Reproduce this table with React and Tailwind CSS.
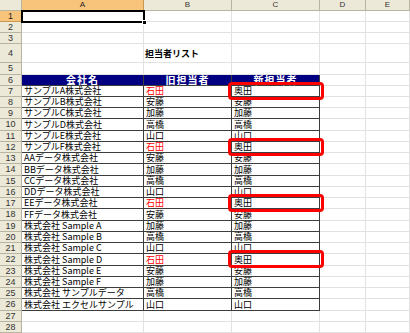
import React from "react";

const COLS = [122, 88, 88, 46];
const A = [
  "サンプルA株式会社","サンプルB株式会社","サンプルC株式会社","サンプルD株式会社","サンプルE株式会社","サンプルF株式会社",
  "AAデータ株式会社","BBデータ株式会社","CCデータ株式会社","DDデータ株式会社","EEデータ株式会社","FFデータ株式会社",
  "株式会社 Sample A","株式会社 Sample B","株式会社 Sample C","株式会社 Sample D","株式会社 Sample E","株式会社 Sample F",
  "株式会社 サンプルデータ","株式会社 エクセルサンプル",
];
const cycle = ["石田","安藤","加藤","高橋","山口"];
const B = A.map((_, i) => cycle[i % 5]);
const C = A.map((_, i) => (i % 5 === 0 ? "奥田" : cycle[i % 5]));

const font = { fontFamily: '"Noto Sans CJK JP", sans-serif' };

function RowHead({ n, sel }) {
  return (
    <div
      className={`w-[22px] shrink-0 flex items-center justify-center border-r border-b text-[9px] leading-none font-['Liberation_Sans',sans-serif] ${
        sel ? "bg-[#f8c47c] border-[#c89a50] text-[#222]" : "bg-[#ece9d8] border-[#b8b4a2] text-[#333]"
      }`}
    >
      {n}
    </div>
  );
}

function Cell({ w, children, cls = "", grow }) {
  return (
    <div
      className={`${grow ? "flex-1" : "shrink-0"} flex items-end pl-[2px] pb-[0px] border-r border-b overflow-hidden whitespace-nowrap text-[9px] leading-[10px] ${cls}`}
      style={grow ? undefined : { width: w }}
    >
      {children}
    </div>
  );
}

function Row({ h, n, sel, children }) {
  return (
    <div className="flex" style={{ height: h }}>
      <RowHead n={n} sel={sel} />
      {children}
    </div>
  );
}

const grid = "border-[#e2e2e2]";
const dark = "border-[#3c3c3c]";

function EmptyCells({ from = 0 }) {
  return (
    <>
      {COLS.slice(from).map((w, i) => (
        <Cell key={i} w={w} cls={grid} />
      ))}
      <Cell grow cls={grid} />
    </>
  );
}

export default function App() {
  const dataHeights = A.map((_, i) => (i % 4 === 3 ? 12 : 11));
  const rowTops = [];
  let t = 86;
  dataHeights.forEach((h) => {
    rowTops.push(t);
    t += h;
  });
  const boxes = [0, 5, 10, 15].map((i) => rowTops[i] - 4);

  return (
    <div className="relative w-[410px] h-[333px] overflow-hidden bg-white text-black" style={font}>
      {/* column headers */}
      <div className="flex h-[11px]">
        <div className="w-[22px] shrink-0 bg-[#ece9d8] border-r border-b border-[#b8b4a2]" />
        {["A", "B", "C", "D"].map((l, i) => (
          <div
            key={l}
            style={{ width: COLS[i] }}
            className={`shrink-0 flex items-center justify-center border-r border-b text-[8px] leading-none font-['Liberation_Sans',sans-serif] ${
              i === 0 ? "bg-[#f8c47c] border-[#c89a50] text-[#222]" : "bg-[#ece9d8] border-[#b8b4a2] text-[#333]"
            }`}
          >
            {l}
          </div>
        ))}
        <div className="flex-1 flex items-center justify-center bg-[#ece9d8] border-r border-b border-[#b8b4a2] text-[8px] leading-none text-[#333] font-['Liberation_Sans',sans-serif]">
          E
        </div>
      </div>

      <Row h={11} n={1} sel>
        <EmptyCells />
      </Row>
      <Row h={11} n={2}>
        <EmptyCells />
      </Row>
      <Row h={11} n={3}>
        <EmptyCells />
      </Row>
      <Row h={19} n={4}>
        <Cell w={COLS[0]} cls={grid} />
        <Cell w={COLS[1]} cls={`${grid} !overflow-visible font-bold pb-[3px]`}>
          <span className="relative z-10 -ml-[1px]">担当者リスト</span>
        </Cell>
        <Cell w={COLS[2]} cls={grid} />
        <Cell w={COLS[3]} cls={grid} />
        <Cell grow cls={grid} />
      </Row>
      <Row h={12} n={5}>
        <EmptyCells />
      </Row>
      <Row h={11} n={6}>
        {["会社名", "旧担当者", "新担当者"].map((s, i) => (
          <div
            key={s}
            style={{ width: COLS[i] }}
            className="shrink-0 flex items-end justify-center bg-[#000080] text-white font-bold text-[10px] leading-[10px] border-r border-b border-[#3c3c3c] tracking-[1px]"
          >
            {s}
          </div>
        ))}
        <EmptyCells from={3} />
      </Row>
      {A.map((a, i) => (
        <Row key={i} h={dataHeights[i]} n={7 + i}>
          <Cell w={COLS[0]} cls={dark}>{a}</Cell>
          <Cell w={COLS[1]} cls={`${dark} ${i % 5 === 0 ? "text-[#ff0000]" : ""}`}>{B[i]}</Cell>
          <Cell w={COLS[2]} cls={dark}>{C[i]}</Cell>
          <Cell w={COLS[3]} cls={grid} />
          <Cell grow cls={grid} />
        </Row>
      ))}
      <Row h={11} n={27}>
        <EmptyCells />
      </Row>
      <Row h={11} n={28}>
        <EmptyCells />
      </Row>

      {/* selection A1 */}
      <div className="absolute left-[21px] top-[10px] w-[124px] h-[13px] border-2 border-black" />
      <div className="absolute left-[142px] top-[20px] w-[5px] h-[5px] bg-black border border-white" />

      {/* red highlight boxes */}
      {boxes.map((top, i) => (
        <div
          key={i}
          className="absolute left-[228px] w-[96px] h-[18px] border-[3px] border-[#ff0000] rounded-[4px]"
          style={{ top }}
        />
      ))}
    </div>
  );
}
